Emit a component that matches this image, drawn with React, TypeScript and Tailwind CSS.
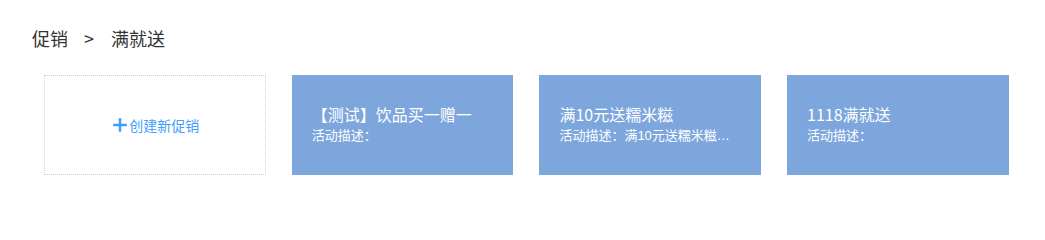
import { Plus } from 'lucide-react'

const promotions = [
  { title: '【测试】饮品买一赠一', desc: '' },
  { title: '满10元送糯米糍', desc: '满10元送糯米糍，满20元送两份糯米糍' },
  { title: '1118满就送', desc: '' },
]

export default function App() {
  return (
    <div className="min-h-[227px] bg-white font-['Microsoft_YaHei','Noto_Sans_CJK_SC',sans-serif]">
      <div className="flex items-center pl-8 pt-[27px] text-[18px] leading-[22px] text-[#333]">
        <span>促销</span>
        <span className="ml-4 mr-[17px]">&gt;</span>
        <span>满就送</span>
      </div>

      <div className="mt-[26px] flex gap-[26px] pl-[44px]">
        <button
          type="button"
          className="flex h-[100px] w-[221.7px] items-center justify-center border border-dotted border-[#cfcfcf] text-[14px] text-[#409eff]"
        >
          <Plus className="h-5 w-5" strokeWidth={3} aria-hidden />
          <span className="-ml-px">创建新促销</span>
        </button>

        {promotions.map(({ title, desc }) => (
          <div
            key={title}
            className="flex h-[100px] w-[221.7px] flex-col justify-center bg-[#7ca6dc] px-5 text-white"
          >
            <div className="truncate text-[16px] leading-[22px]">{title}</div>
            <div className="truncate font-['Liberation_Sans','Noto_Sans_CJK_SC',sans-serif] text-[13px] leading-[22px]">
              活动描述：{desc}
            </div>
          </div>
        ))}
      </div>
    </div>
  )
}
